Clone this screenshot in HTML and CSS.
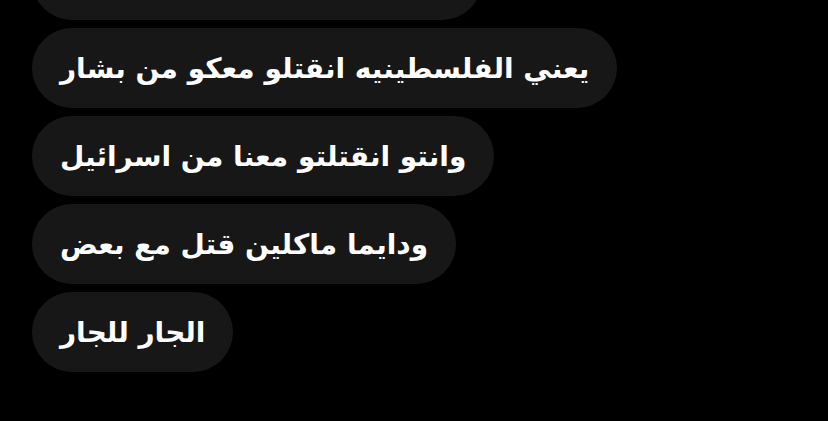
FILE: index.html
```html
<!DOCTYPE html>
<html lang="ar">
<head>
    <meta charset="UTF-8">
    <meta name="viewport" content="width=device-width, initial-scale=1.0">
    <title>Chat</title>
    <link rel="stylesheet" href="styles.css">
</head>
<body>
    <main class="thread">
        <div class="bubble bubble-cut">ولا يوم كنا مع بعض يا جاري</div>
        <div class="bubble">يعني الفلسطينيه انقتلو معكو من بشار</div>
        <div class="bubble">وانتو انقتلتو معنا من اسرائيل</div>
        <div class="bubble">ودايما ماكلين قتل مع بعض</div>
        <div class="bubble">الجار للجار</div>
    </main>
</body>
</html>
```

FILE: styles.css
```css
body {
    margin: 0;
    padding: 0;
    background-color: #000;
    font-family: "DejaVu Sans", sans-serif;
    overflow: hidden;
}

.thread {
    display: flex;
    flex-direction: column;
    align-items: flex-start;
    gap: 8px;
    padding-left: 32px;
    margin-top: -60px;
}

.bubble {
    direction: rtl;
    height: 80px;
    line-height: 82px;
    padding: 0 28px;
    border-radius: 40px;
    background-color: #171717;
    color: #fff;
    font-size: 28px;
    font-weight: bold;
    white-space: nowrap;
}

.bubble-cut {
    padding-left: 44px;
}
```
